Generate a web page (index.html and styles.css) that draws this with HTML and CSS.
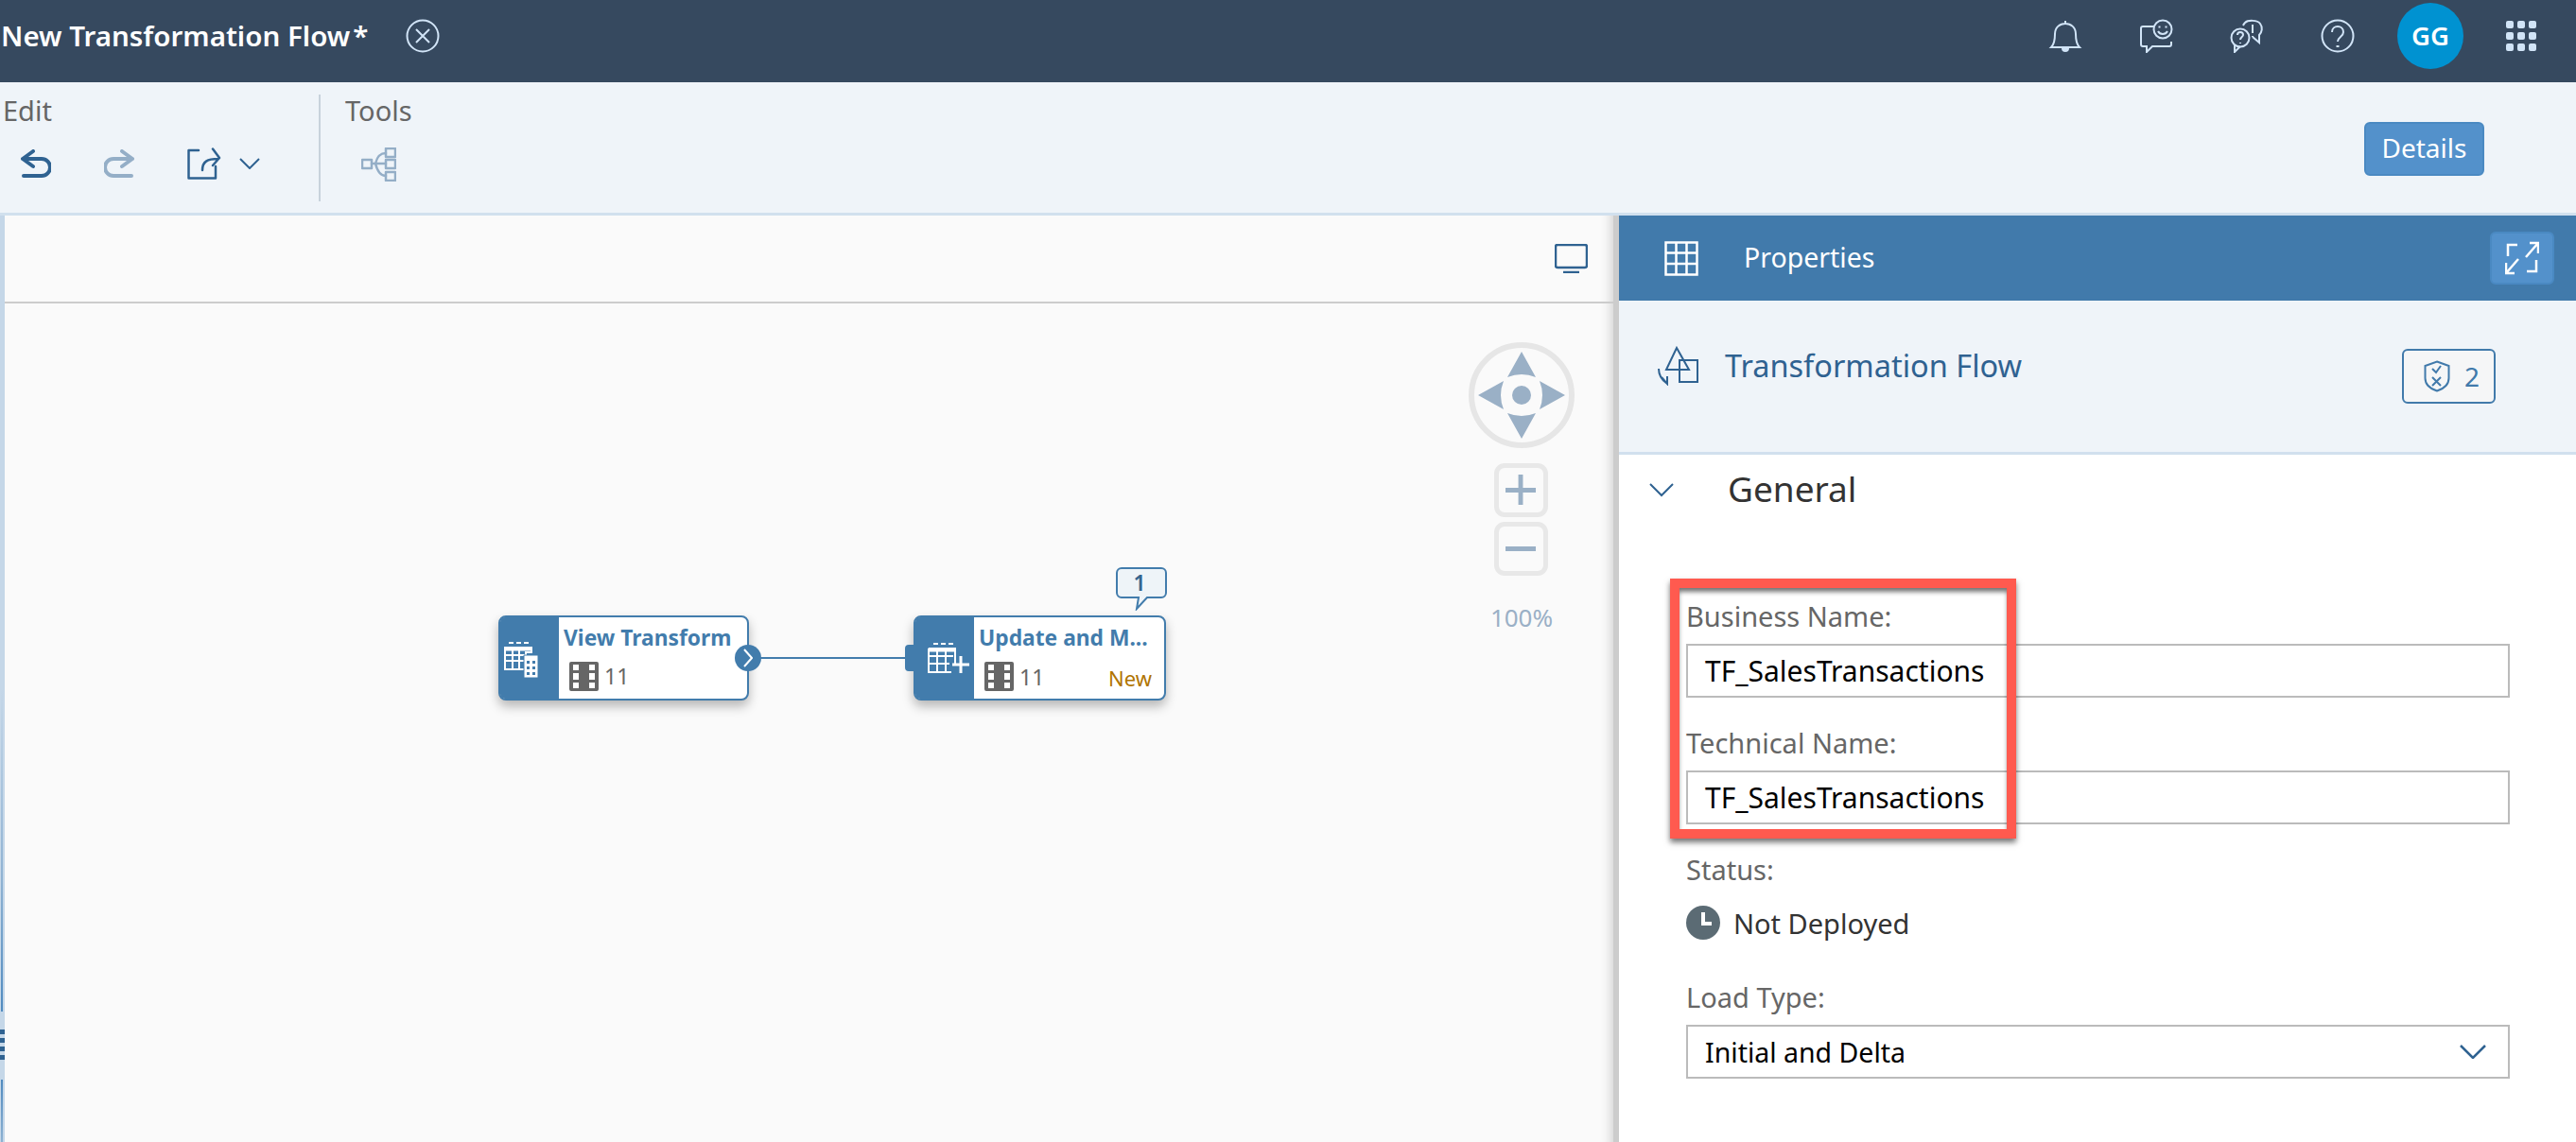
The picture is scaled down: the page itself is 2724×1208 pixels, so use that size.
FILE: index.html
```html
<!DOCTYPE html>
<html lang="en">
<head>
    <meta charset="UTF-8">
    <title>New Transformation Flow</title>
    <link rel="stylesheet" href="styles.css">
</head>
<body>
    <header class="shell-bar">
        <div class="shell-title">New Transformation Flow<span class="shell-star">*</span></div>
        <svg class="shell-close" viewBox="0 0 36 36"><circle cx="18" cy="18" r="16.5"/><path d="M11 11 25 25M25 11 11 25"/></svg>
        <div class="shell-actions">
            <svg class="shell-icon" viewBox="0 0 36 36"><path d="M3 30C6 27 7 24 7 16 7 9 12 5 18 5s11 4 11 11c0 8 1 11 4 14ZM18 2v3"/><path class="solid" d="M14 31h8a4 4 0 0 1-8 0Z"/></svg>
            <svg class="shell-icon" viewBox="0 0 36 36"><path d="M16 8H4a2 2 0 0 0-2 2v17a2 2 0 0 0 2 2h4v6l6-6h18a2 2 0 0 0 2-2v-3"/><circle cx="25" cy="11" r="9.5"/><path d="M20 13c2 4 8 4 10 0M21.500 7.500v2M28.500 7.500v2"/></svg>
            <svg class="shell-icon" viewBox="0 0 36 36"><path d="M14 7a9 9 0 0 1 2-3c3-3 13-3 16 1s2 9-1 12v8l-7-6"/><path d="M24 6v9M24 18v1"/><circle cx="11" cy="20" r="9.500"/><path d="M5 28v7l6-6M8 17c0-4 6-4 6 0 0 2-3 2-3 5M11 25v1"/></svg>
            <svg class="shell-icon" viewBox="0 0 36 36"><circle cx="18" cy="18" r="16.500"/><path d="M12 14c0-8 12-8 12 0 0 5-6 5-6 10"/><path class="thick" d="M18 28v2"/></svg>
            <div class="avatar">GG</div>
            <div class="waffle">
                <i></i><i></i><i></i><i></i><i></i><i></i><i></i><i></i><i></i>
            </div>
        </div>
    </header>

    <section class="toolbar">
        <div class="tool-group tool-group-edit">
            <div class="tool-label">Edit</div>
            <div class="tool-icons">
                <svg class="tool-icon undo" viewBox="0 0 32 30"><path d="M13 2 2 10l11 8M2 10h20a9 9 0 0 1 0 18H3"/></svg>
                <svg class="tool-icon redo" viewBox="0 0 32 30"><path d="M19 2l11 8-11 8M30 10H10a9 9 0 0 0 0 18h19"/></svg>
                <svg class="tool-icon share" viewBox="0 0 38 34"><path d="M12 3H1.500v29.500H30V20M16 24c0-9 5-12 17-12M27 1.500l7 9.500-7 8"/></svg>
                <svg class="tool-chevron" viewBox="0 0 22 12"><path d="M1 1l10 10L21 1"/></svg>
            </div>
        </div>
        <div class="tool-group tool-group-tools">
            <div class="tool-label">Tools</div>
            <div class="tool-icons">
                <svg class="tool-icon tree" viewBox="0 0 37 36"><rect x="1" y="13" width="10" height="9"/><rect x="26" y="1" width="10" height="9"/><rect x="26" y="13" width="10" height="9"/><rect x="26" y="26" width="10" height="9"/><path d="M11 17h15M15 17c2-8 5-11 11-11M15 17c2 8 5 13 11 13"/></svg>
            </div>
        </div>
        <button class="details-btn">Details</button>
    </section>

    <main class="workspace">
        <section class="canvas">
            <div class="canvas-bar">
                <svg class="screen-icon" viewBox="0 0 35 31"><rect x="1" y="1" width="33" height="24" rx="2"/><path d="M9 30h17"/></svg>
            </div>
            <div class="canvas-grip">
                <span class="grip-line grip-top"></span>
                <span class="grip-dots"><i></i><i></i><i></i><i></i></span>
                <span class="grip-line grip-bottom"></span>
            </div>

            <svg class="nav-pad" viewBox="0 0 112 112">
                <circle class="nav-ring" cx="56" cy="56" r="53"/>
                <path d="M56 10 71 37Q56 31 41 37ZM56 102 41 75Q56 81 71 75ZM10 56 37 41Q31 56 37 71ZM102 56 75 71Q81 56 75 41Z"/>
                <circle cx="56" cy="56" r="10"/>
            </svg>
            <div class="zoom-btn zoom-in"><svg viewBox="0 0 34 34"><path d="M0 17h33M16.500 0v33"/></svg></div>
            <div class="zoom-btn zoom-out"><svg viewBox="0 0 34 34"><path d="M0 17h33"/></svg></div>
            <div class="zoom-value">100%</div>

            <div class="flow-line"></div>

            <div class="node node-view">
                <div class="node-side">
                    <svg class="node-type" viewBox="0 0 38 38"><g class="tbl"><path d="M6 1h5M14 1h5M22 1h5"/><path class="fill" d="M1 6h30v4H1z"/><path d="M2 6h28v5H24v18H2zM2 14h22M2 20h22M10 8v21M17 8v21"/></g><path class="fill" d="M22 14h15v24H22z"/><g class="holes"><rect x="25" y="20" width="3" height="3"/><rect x="31" y="20" width="3" height="3"/><rect x="25" y="26" width="3" height="3"/><rect x="31" y="26" width="3" height="3"/><rect x="25" y="32" width="3" height="3"/><rect x="31" y="32" width="3" height="3"/></g></svg>
                </div>
                <div class="node-body">
                    <div class="node-name">View Transform</div>
                    <div class="node-meta">
                        <svg class="film" viewBox="0 0 31 31"><use href="#film"/></svg>
                        <span>11</span>
                    </div>
                </div>
                <div class="port-out"><svg viewBox="0 0 10 20"><path d="M1 1l8 9-8 9"/></svg></div>
            </div>

            <div class="node node-update">
                <div class="port-in"></div>
                <div class="node-side">
                    <svg class="node-type" viewBox="0 0 46 34"><g class="tbl"><path d="M7 1h5M15 1h5M23 1h5"/><path class="fill" d="M1 5h30v5H1z"/><path d="M2 6h28v16M26 31H2V6M2 14h26M2 22h22M11 8v23M20 8v23"/></g><path class="plus" d="M27 23h18M36 14v18"/></svg>
                </div>
                <div class="node-body">
                    <div class="node-name">Update and M...</div>
                    <div class="node-meta">
                        <svg class="film" viewBox="0 0 31 31"><use href="#film"/></svg>
                        <span>11</span>
                        <span class="node-new">New</span>
                    </div>
                </div>
                <div class="node-comment">
                    <svg viewBox="0 0 54 46"><path d="M6 1h42a5 5 0 0 1 5 5v21a5 5 0 0 1-5 5H33L22 44l2-12H6a5 5 0 0 1-5-5V6a5 5 0 0 1 5-5Z"/></svg>
                    <span>1</span>
                </div>
            </div>
        </section>

        <aside class="panel">
            <div class="panel-head">
                <svg class="panel-grid" viewBox="0 0 36 37"><path d="M1.500 1.500h33v34h-33zM1.500 12.500h33M1.500 24h33M12.500 1.500v34M23.500 1.500v34"/></svg>
                <span class="panel-title">Properties</span>
                <div class="expand-btn">
                    <svg viewBox="0 0 36 36"><path d="M13 4H3v12M35 2 22 17M26 2h9v11M1 34l13-15M1 23v11h9M23 32h10V20"/></svg>
                </div>
            </div>
            <div class="panel-sub">
                <svg class="flow-icon" viewBox="0 0 44 42"><path d="M21 2 10 25h24ZM24 15h19v23H24ZM24 15v10M2 24c0 7 3 12 9 16M5 33l6 7 0-8"/></svg>
                <span class="panel-name">Transformation Flow</span>
                <div class="valid-badge">
                    <svg viewBox="0 0 28 34"><path d="M14 1.500 26.500 6v13c0 6-5 11-12.500 13.500C6.500 30 1.500 25 1.500 19V6ZM9 9l4 4 5-7M9 18l9 9M18 18l-9 9"/></svg>
                    <span>2</span>
                </div>
            </div>
            <div class="section-head">
                <svg class="section-chevron" viewBox="0 0 26 15"><path d="M1 1l12 12L25 1"/></svg>
                <span class="section-title">General</span>
            </div>
            <div class="form">
                <label class="field-label">Business Name:</label>
                <div class="field-input field-name">TF_SalesTransactions</div>
                <label class="field-label field-gap">Technical Name:</label>
                <div class="field-input field-name">TF_SalesTransactions</div>
                <label class="field-label field-gap">Status:</label>
                <div class="status-row">
                    <svg class="clock" viewBox="0 0 36 36"><circle cx="18" cy="18" r="18"/><path d="M18 7v12h9"/></svg>
                    <span>Not Deployed</span>
                </div>
                <label class="field-label load-label">Load Type:</label>
                <div class="field-input field-select">
                    <span>Initial and Delta</span>
                    <svg viewBox="0 0 28 15"><path d="M1 1l13 13L27 1"/></svg>
                </div>
            </div>
            <div class="highlight-box"></div>
        </aside>
    </main>

    <svg class="defs">
        <symbol id="film" viewBox="0 0 31 31">
            <path fill="#666" fill-rule="evenodd" d="M2 0h27a2 2 0 0 1 2 2v27a2 2 0 0 1-2 2H2a2 2 0 0 1-2-2V2a2 2 0 0 1 2-2ZM4 3v6h6V3Zm17 0v6h6V3ZM4 12v7h6v-7Zm17 0v7h6v-7ZM4 22v6h6v-6Zm17 0v6h6v-6Z"/>
        </symbol>
    </svg>
</body>
</html>
```

FILE: styles.css
```css
* {
    box-sizing: border-box;
}
html, body {
    margin: 0;
    padding: 0;
    height: 100%;
    overflow: hidden;
}
body {
    display: flex;
    flex-direction: column;
    background-color: #fff;
    font-family: "Noto Sans", Arial, sans-serif;
    color: #333;
}
.defs {
    position: absolute;
    width: 0;
    height: 0;
}
svg {
    display: block;
    fill: none;
}

/* Shell bar */
.shell-bar {
    display: flex;
    align-items: center;
    flex: 0 0 87px;
    padding-bottom: 12px;
    background-color: #36495f;
    color: #fff;
}
.shell-title {
    width: 429px;
    padding-left: 1px;
    font-size: 29.5px;
    font-weight: 600;
    white-space: nowrap;
}
.shell-star {
    margin-left: 3px;
}
.shell-close {
    width: 36px;
    height: 36px;
    stroke: #d1e4f7;
    stroke-width: 2;
}
.shell-actions {
    display: flex;
    align-items: center;
    margin-left: auto;
}
.shell-icon {
    width: 36px;
    height: 36px;
    margin-right: 60px;
    stroke: #d1e4f7;
    stroke-width: 2;
}
.shell-icon .solid {
    fill: #d1e4f7;
    stroke: none;
}
.shell-icon .thick {
    stroke-width: 3;
}
.avatar {
    display: flex;
    align-items: center;
    justify-content: center;
    width: 70px;
    height: 70px;
    margin-left: -15px;
    border-radius: 50%;
    background-color: #0092d1;
    font-size: 27.5px;
    font-weight: 600;
}
.waffle {
    display: grid;
    grid-template-columns: repeat(3, 8px);
    grid-auto-rows: 8px;
    gap: 4px;
    margin: 0 42px 0 45px;
}
.waffle i {
    background-color: #d1e4f7;
    border-radius: 2px;
}

/* Toolbar */
.toolbar {
    display: flex;
    flex: 0 0 141px;
    position: relative;
    background-color: #eff4f9;
    border-bottom: 3px solid #d1e0ee;
}
.tool-group-edit {
    width: 339px;
    height: 113px;
    margin-top: 13px;
    padding-left: 3px;
    border-right: 2px solid #c8d2dc;
}
.tool-group-tools {
    padding-left: 26px;
    padding-top: 13px;
}
.tool-label {
    height: 36px;
    margin-top: -1px;
    font-size: 29px;
    line-height: 36px;
    color: #666;
}
.tool-icons {
    display: flex;
    align-items: center;
    margin-top: 21px;
}
.tool-icon {
    stroke-linecap: round;
    stroke-linejoin: round;
}
.undo, .redo {
    width: 32px;
    height: 30px;
    stroke-width: 4;
}
.undo {
    margin-left: 19px;
    stroke: #2f6291;
}
.redo {
    margin-left: 56px;
    stroke: #94aec7;
}
.share {
    width: 38px;
    height: 34px;
    margin-left: 56px;
    stroke: #2f6291;
    stroke-width: 2.5;
}
.tool-chevron {
    width: 22px;
    height: 12px;
    margin-left: 17px;
    stroke: #2f6291;
    stroke-width: 2;
}
.tree {
    width: 37px;
    height: 36px;
    margin-left: 17px;
    stroke: #94aec7;
    stroke-width: 2.5;
}
.details-btn {
    position: absolute;
    top: 42px;
    left: 2500px;
    width: 127px;
    height: 57px;
    padding: 0 0 4px;
    background-color: #5391cb;
    border: 2px solid #4a89c2;
    border-radius: 6px;
    color: #fff;
    font-family: inherit;
    font-size: 28px;
}

/* Canvas */
.workspace {
    display: flex;
    flex: 1;
    min-height: 0;
}
.canvas {
    position: relative;
    flex: 0 0 1712px;
    background-color: #fafafa;
    border-right: 6px solid #ccc;
    box-shadow: inset -14px 0 12px -12px rgba(0, 0, 0, 0.18);
}
.canvas-bar {
    display: flex;
    justify-content: flex-end;
    height: 93px;
    padding: 30px 27px 0 0;
    border-bottom: 2px solid #ccc;
}
.screen-icon {
    width: 35px;
    height: 31px;
    stroke: #2f6291;
    stroke-width: 2.5;
}
.canvas-grip {
    position: absolute;
    top: 0;
    bottom: 0;
    left: 0;
    display: flex;
    flex-direction: column;
    width: 5px;
    background-color: #c5d7e8;
}
.grip-line {
    display: block;
    width: 2px;
    margin-left: 1px;
    background-color: #5b90c0;
}
.grip-top {
    flex: 1;
    margin-top: 500px;
    background: linear-gradient(#c5d7e8, #8db1d2 60%, #4f8abf);
}
.grip-bottom {
    height: 66px;
    background: linear-gradient(#4f8abf, #8db1d2);
}
.grip-dots {
    display: flex;
    flex-direction: column;
    gap: 4px;
    padding: 19px 0 21px;
}
.grip-dots i {
    display: block;
    height: 5px;
    background-color: #2f6291;
}
.nav-pad {
    position: absolute;
    top: 134px;
    left: 1553px;
    width: 112px;
    height: 112px;
    fill: #9ab0c6;
}
.nav-pad .nav-ring {
    fill: none;
    stroke: #e6e6e6;
    stroke-width: 6;
}
.zoom-btn {
    position: absolute;
    left: 1580px;
    display: flex;
    align-items: center;
    justify-content: center;
    width: 57px;
    height: 57px;
    border: 5px solid #e8e8e8;
    border-radius: 11px;
}
.zoom-btn svg {
    width: 33px;
    height: 33px;
    stroke: #9ab0c6;
    stroke-width: 5;
}
.zoom-in {
    top: 262px;
}
.zoom-out {
    top: 324px;
}
.zoom-value {
    position: absolute;
    top: 407px;
    left: 1569px;
    width: 80px;
    font-size: 26px;
    line-height: 36px;
    text-align: center;
    color: #9ab0c6;
}

/* Flow nodes */
.flow-line {
    position: absolute;
    top: 467px;
    left: 800px;
    width: 160px;
    height: 2px;
    background-color: #427cac;
}
.node {
    position: absolute;
    top: 423px;
    display: flex;
    height: 90px;
    background-color: #fff;
    border: 2px solid #427cac;
    border-radius: 8px;
    box-shadow: 0 6px 12px rgba(0, 0, 0, 0.28);
}
.node-view {
    left: 527px;
    width: 265px;
}
.node-update {
    left: 966px;
    width: 267px;
}
.node-side {
    display: flex;
    align-items: center;
    flex: 0 0 62px;
    background-color: #427cac;
    border-radius: 5px 0 0 5px;
}
.node-type {
    stroke: #fff;
    stroke-width: 2;
    fill: none;
}
.node-view .node-type {
    width: 38px;
    height: 38px;
    margin: 4px 0 0 3px;
}
.node-update .node-type {
    width: 46px;
    height: 34px;
    margin: 2px 0 0 12px;
}
.node-type .fill {
    fill: #fff;
    stroke: #427cac;
    stroke-width: 1;
}
.node-type .tbl {
    stroke-width: 2;
}
.node-type .holes rect {
    fill: #427cac;
    stroke: none;
}
.node-type .plus {
    stroke-width: 3;
}
.node-body {
    flex: 1;
    min-width: 0;
    padding: 4px 0 0 5px;
}
.node-name {
    font-size: 22.8px;
    font-weight: 700;
    line-height: 36px;
    color: #427cac;
    white-space: nowrap;
}
.node-meta {
    display: flex;
    align-items: center;
    margin: 6px 0 0 6px;
    font-size: 23px;
    color: #666;
}
.film {
    width: 31px;
    height: 31px;
    margin-right: 6px;
}
.node-new {
    margin-left: auto;
    margin-right: 13px;
    padding-top: 3px;
    font-size: 22px;
    color: #b07400;
}
.port-out {
    position: absolute;
    top: 29px;
    right: -15px;
    display: flex;
    align-items: center;
    justify-content: center;
    width: 28px;
    height: 28px;
    border-radius: 50%;
    background-color: #427cac;
}
.port-out svg {
    width: 10px;
    height: 20px;
    stroke: #fff;
    stroke-width: 2;
}
.port-in {
    position: absolute;
    top: 29px;
    left: -11px;
    width: 10px;
    height: 28px;
    background-color: #427cac;
    border-radius: 4px 0 0 4px;
}
.node-comment {
    position: absolute;
    top: -53px;
    right: -3px;
    width: 54px;
    height: 46px;
}
.node-comment svg {
    width: 54px;
    height: 46px;
    fill: #eef4f8;
    stroke: #427cac;
    stroke-width: 2;
}
.node-comment span {
    position: absolute;
    top: 0;
    left: -2px;
    width: 54px;
    font-size: 23px;
    font-weight: 600;
    line-height: 33px;
    text-align: center;
    color: #36658f;
}

/* Properties panel */
.panel {
    position: relative;
    flex: 1;
    min-width: 0;
}
.panel-head {
    display: flex;
    align-items: center;
    height: 90px;
    padding-left: 48px;
    background-color: #417aab;
    color: #fff;
}
.panel-grid {
    width: 36px;
    height: 37px;
    stroke: #fff;
    stroke-width: 2.5;
}
.panel-title {
    margin: -3px 0 0 48px;
    font-size: 28.5px;
}
.expand-btn {
    display: flex;
    align-items: center;
    justify-content: center;
    width: 68px;
    height: 56px;
    margin-left: auto;
    margin-right: 23px;
    background-color: #5391cb;
    border: 2px solid #4a89c2;
    border-radius: 6px;
}
.expand-btn svg {
    width: 36px;
    height: 36px;
    stroke: #fff;
    stroke-width: 2.5;
}
.panel-sub {
    position: relative;
    display: flex;
    align-items: flex-start;
    height: 163px;
    padding: 48px 0 0 40px;
    background-color: #eff4f9;
    border-bottom: 3px solid #d1e0ee;
    color: #2f6291;
}
.flow-icon {
    width: 44px;
    height: 42px;
    stroke: #2f6291;
    stroke-width: 2;
}
.panel-name {
    margin: -1px 0 0 28px;
    font-size: 32.5px;
    line-height: 44px;
}
.valid-badge {
    position: absolute;
    top: 51px;
    left: 828px;
    display: flex;
    align-items: center;
    width: 99px;
    height: 58px;
    padding-left: 21px;
    background-color: #f5f6f7;
    border: 2px solid #417aab;
    border-radius: 6px;
    font-size: 28px;
    color: #417aab;
}
.valid-badge svg {
    width: 28px;
    height: 34px;
    margin-right: 15px;
    stroke: #417aab;
    stroke-width: 2;
}
.section-head {
    display: flex;
    align-items: center;
    height: 74px;
    padding-left: 32px;
}
.section-chevron {
    width: 26px;
    height: 15px;
    stroke: #2f6291;
    stroke-width: 2;
}
.section-title {
    margin: -3px 0 0 57px;
    font-size: 37px;
}
.form {
    padding: 0 70px 0 71px;
    margin-top: 79px;
}
.field-label {
    display: block;
    height: 36px;
    margin-bottom: 11px;
    font-size: 29px;
    line-height: 36px;
    color: #666;
}
.field-gap {
    margin-top: 30px;
}
.field-input {
    display: flex;
    align-items: center;
    height: 57px;
    padding-left: 18px;
    background-color: #fff;
    border: 2px solid #bbb;
    font-size: 28.5px;
    color: #000;
}
.field-name {
    font-size: 30px;
}
.field-select {
    justify-content: space-between;
    padding-right: 23px;
}
.field-select svg {
    width: 28px;
    height: 15px;
    stroke: #2f6291;
    stroke-width: 2.5;
}
.status-row {
    display: flex;
    align-items: center;
    height: 36px;
    margin-top: 20px;
    font-size: 29px;
}
.clock {
    width: 36px;
    height: 36px;
    margin-right: 14px;
}
.clock circle {
    fill: #5b6b74;
}
.clock path {
    stroke: #fff;
    stroke-width: 4;
}
.load-label {
    margin-top: 43px;
}
.highlight-box {
    position: absolute;
    top: 384px;
    left: 54px;
    width: 366px;
    height: 275px;
    border: 10px solid #ff5a4f;
    box-shadow: 0 4px 6px rgba(0, 0, 0, 0.55), inset 0 5px 5px -1px rgba(0, 0, 0, 0.55);
}
```
